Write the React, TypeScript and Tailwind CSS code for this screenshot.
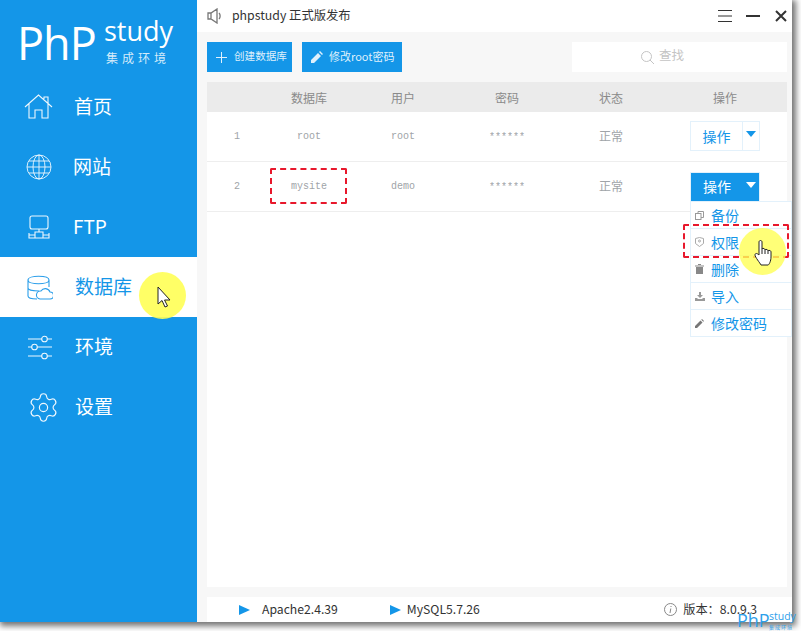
import { Settings } from 'lucide-react';

const CJK = "font-['Noto_Sans_CJK_SC',sans-serif]";

const S = { fill: 'none', stroke: 'currentColor', strokeWidth: 1.1 } as const;

const icons: Record<string, JSX.Element> = {
  home: (
    <svg width="30" height="26" viewBox="0 0 30 26" {...S}>
      <path d="M1 13 14.5 1 28 13M5 10v14h6v-8h7v8h6V10M20 5V3h4v6" />
    </svg>
  ),
  web: (
    <svg width="26" height="26" viewBox="0 0 26 26" {...S} strokeWidth="0.9">
      <circle cx="13" cy="13" r="12" />
      <ellipse cx="13" cy="13" rx="6" ry="12" />
      <path d="M13 1v24M1 13h24M3 7h20M3 19h20" />
    </svg>
  ),
  ftp: (
    <svg width="22" height="25" viewBox="0 0 22 25" {...S}>
      <rect x="2" y="1" width="18" height="13" rx="2" />
      <path d="M11 14v3M7 17h8v6H7zM7 20H1v-2M15 20h6v-2M1 20v3h6M21 20v3h-6" />
    </svg>
  ),
  db: (
    <svg width="26" height="25" viewBox="0 0 26 25" {...S}>
      <path d="M1 5c0-5 21-5 21 0S1 10 1 5v16c0 2 4 3 9 3M1 13c0 2 6 3 11 3M22 5v7" />
      <path d="M13 24h10a3 3 0 0 0 0-7 5 5 0 0 0-9-1 4 4 0 0 0-1 8z" />
    </svg>
  ),
  env: (
    <svg width="25" height="25" viewBox="0 0 25 25" {...S}>
      <path d="M1 4h14M20 4h5M1 12h4M10 12h15M1 21h14M20 21h5" />
      <circle cx="17.500" cy="4" r="2.800" />
      <circle cx="7.500" cy="12" r="2.800" />
      <circle cx="17.500" cy="21" r="2.800" />
    </svg>
  ),
  gear: <Settings size={33} strokeWidth={0.85} />,
};

const nav = [
  { icon: 'home', label: '首页', x: 'pl-[24px]', gap: 'w-[50px]' },
  { icon: 'web', label: '网站', x: 'pl-[26px]', gap: 'w-[47px]' },
  { icon: 'ftp', label: 'FTP', x: 'pl-[28px]', gap: 'w-[45px]' },
  { icon: 'db', label: '数据库', x: 'pl-[27px]', gap: 'w-[48px]', active: true },
  { icon: 'env', label: '环境', x: 'pl-[27px]', gap: 'w-[48px]' },
  { icon: 'gear', label: '设置', x: 'pl-[27px]', gap: 'w-[48px]' },
];

function NavItem({ item }: { item: (typeof nav)[number] }) {
  return (
    <div className={`h-[60px] flex items-center ${item.x} ${item.active ? 'bg-white text-[#2a9eea]' : 'text-[#eef7fd]'}`}>
      <div className={`${item.gap} shrink-0 flex items-center`}>{icons[item.icon]}</div>
      <span className={`${CJK} text-[19px] leading-none pb-[3px] ${item.active ? 'text-[#1496e8]' : 'text-white'}`}>{item.label}</span>
    </div>
  );
}

function Row({ n, db, user, active }: { n: string; db: string; user: string; active?: boolean }) {
  return (
    <div className="h-[50px] grid grid-cols-[60px_84px_104px_104px_104px_1fr] items-center border-b border-[#eeeeee] bg-white text-[#a0a4a8]">
      <span className="text-center font-['Liberation_Mono',monospace] text-[10px]">{n}</span>
      <span className="text-center font-['Liberation_Mono',monospace] text-[10px]">{db}</span>
      <span className="text-center font-['Liberation_Mono',monospace] text-[10px]">{user}</span>
      <span className="text-center font-['Liberation_Mono',monospace] text-[10px] pt-[2px]">******</span>
      <span className={`text-center ${CJK} text-[12px] pb-[2px]`}>正常</span>
      <div className={`pl-[27px] ${active ? '' : 'pb-[1px]'}`}>
        {active ? (
          <div className="w-[70px] h-[30px] bg-[#1496e8] border border-[#e3f1fb] flex items-center text-white">
            <span className={`w-[52px] text-center ${CJK} text-[14px] pb-[1px]`}>操作</span>
            <span className="w-0 h-0 border-x-[5px] border-x-transparent border-t-[6px] border-t-white ml-[3px] -mt-[4px]" />
          </div>
        ) : (
          <div className="w-[70px] h-[30px] bg-white border border-[#e3f1fb] flex items-center text-[#1496e8]">
            <span className={`w-[52px] text-center ${CJK} text-[14px] border-r border-[#e3f1fb] h-full leading-[28px]`}>操作</span>
            <span className="w-0 h-0 border-x-[5px] border-x-transparent border-t-[6px] border-t-[#1496e8] ml-[3px] -mt-[4px]" />
          </div>
        )}
      </div>
    </div>
  );
}

const menu: { label: string; icon: JSX.Element }[] = [
  {
    label: '备份',
    icon: (
      <svg width="9" height="9" viewBox="0 0 9 9" fill="none" stroke="#999" strokeWidth="1">
        <rect x="0.500" y="2.500" width="5.500" height="6" />
        <path d="M3 2V.5h5.500V6.500H6" />
      </svg>
    ),
  },
  {
    label: '权限',
    icon: (
      <svg width="9" height="10" viewBox="0 0 9 10" fill="none" stroke="#aaa" strokeWidth="1">
        <path d="M.5 1.500 4.500.5l4 1v5l-4 3-4-3z" />
        <circle cx="4.500" cy="4" r="1" />
      </svg>
    ),
  },
  {
    label: '删除',
    icon: (
      <svg width="9" height="10" viewBox="0 0 9 10" fill="#888">
        <path d="M0 1.500h9v1H0zM3 0h3v1H3zM1 3h7v7H1z" />
      </svg>
    ),
  },
  {
    label: '导入',
    icon: (
      <svg width="10" height="9" viewBox="0 0 10 9" fill="#999">
        <path d="M4 0h2v3h2L5 6 2 3h2zM0 6h2l1 1h4l1-1h2v3H0z" />
      </svg>
    ),
  },
  {
    label: '修改密码',
    icon: (
      <svg width="9" height="9" viewBox="0 0 9 9" fill="#777">
        <path d="M0 9V7l5.500-5.500 2 2L2 9zM6.300.7 7 0l2 2-.7.7z" />
      </svg>
    ),
  },
];

export default function App() {
  return (
    <div className="relative w-[801px] h-[631px] bg-white overflow-hidden font-['Liberation_Sans',sans-serif]">
      <div className="relative w-[792px] h-[622px] flex bg-[#f7f7f7] shadow-[2px_2px_6px_2px_rgba(0,0,0,0.55)]">
        {/* Sidebar */}
        <aside className="w-[197px] shrink-0 bg-[#1496e8]">
          <div className="h-[77px] relative text-white font-['Open_Sans',sans-serif]">
            <span className="absolute left-[17px] top-[13px] text-[45px] leading-[60px] tracking-[-1px]">PhP</span>
            <span className="absolute left-[104px] top-[11px] text-[27px] leading-[40px]">study</span>
            <span className={`absolute left-[106px] top-[50px] ${CJK} text-[12px] leading-[16px] tracking-[4px] text-[#d5ebfa]`}>集成环境</span>
          </div>
          {nav.map((item) => (
            <NavItem key={item.label} item={item} />
          ))}
        </aside>

        {/* Main */}
        <main className="flex-1 flex flex-col min-w-0">
          <header className="h-[32px] bg-white flex items-center pl-[10px] pr-[5px] shrink-0">
            <svg width="15" height="16" viewBox="0 0 15 16" fill="none" stroke="#777" strokeWidth="1.300">
              <path d="M1 5h3l6-4v14l-6-4H1zM4 5v6M12 5c1.500 1.500 1.500 4.500 0 6" />
            </svg>
            <span className={`ml-[10px] text-[12.300px] text-[#333] pb-[2px] ${CJK}`}>phpstudy 正式版发布</span>
            <div className="ml-auto flex items-center text-[#333]">
              <svg width="14" height="12" viewBox="0 0 14 12" stroke="currentColor" strokeWidth="1">
                <path d="M0 .5h14M0 6h14M0 11.500h14" />
              </svg>
              <span className="ml-[14px] w-[14px] h-[2px] bg-[#333]" />
              <svg className="ml-[15px]" width="12" height="12" viewBox="0 0 12 12" stroke="currentColor" strokeWidth="2">
                <path d="m1 1 10 10M11 1 1 11" />
              </svg>
            </div>
          </header>

          <div className="flex-1 flex flex-col pl-[10px] pr-[5px] pt-[10px] min-h-0">
            <div className="h-[30px] flex items-stretch shrink-0">
              <div className="w-[85px] bg-[#1496e8] text-[#dff0fc] flex items-center pl-[9px]">
                <svg width="11" height="11" viewBox="0 0 11 11" stroke="currentColor" strokeWidth="1">
                  <path d="M5.500 0v11M0 5.500h11" />
                </svg>
                <span className={`ml-[7px] ${CJK} text-[10.600px] pb-[2px]`}>创建数据库</span>
              </div>
              <div className="ml-[10px] w-[100px] bg-[#1496e8] text-[#dff0fc] flex items-center pl-[9px]">
                <svg width="12" height="12" viewBox="0 0 12 12" fill="currentColor">
                  <path d="M0 12V9l7-7 3 3-7 7zM8 1l1-1 3 3-1 1z" />
                </svg>
                <span className={`ml-[6px] ${CJK} text-[11px] pb-[2px]`}>修改root密码</span>
              </div>
              <div className="ml-auto w-[215px] bg-white flex items-center pl-[69px] text-[#c4c4c4]">
                <svg width="13" height="13" viewBox="0 0 13 13" fill="none" stroke="currentColor" strokeWidth="1">
                  <circle cx="5.500" cy="5.500" r="5" />
                  <path d="m9 9 4 4" />
                </svg>
                <span className={`ml-[5px] ${CJK} text-[12.500px] pb-[3px]`}>查找</span>
              </div>
            </div>

            <div className={`mt-[10px] h-[30px] shrink-0 bg-[#ebebeb] grid grid-cols-[60px_84px_104px_104px_104px_1fr] items-center text-center ${CJK} text-[12px] text-[#8a8a8a] pt-[1px]`}>
              <span />
              <span>数据库</span>
              <span>用户</span>
              <span>密码</span>
              <span>状态</span>
              <span>操作</span>
            </div>

            <div className="flex-1 bg-white min-h-0">
              <Row n="1" db="root" user="root" />
              <Row n="2" db="mysite" user="demo" active />
            </div>

            <div className="h-[10px] shrink-0" />
          </div>

          <footer className={`h-[25px] shrink-0 ml-[10px] bg-white flex items-center text-[12.200px] text-[#333] pr-[35px] ${CJK}`}>
            <span className="ml-[32px] w-0 h-0 border-y-[5.500px] border-y-transparent border-l-[11px] border-l-[#1496e8]" />
            <span className="ml-[12px] pb-[1px]">Apache2.4.39</span>
            <span className="ml-[52px] w-0 h-0 border-y-[5.500px] border-y-transparent border-l-[11px] border-l-[#1496e8]" />
            <span className="ml-[6px] pb-[1px]">MySQL5.7.26</span>
            <span className="ml-auto flex items-center">
              <svg width="13" height="13" viewBox="0 0 13 13" fill="none" stroke="#888" strokeWidth="1">
                <circle cx="6.500" cy="6.500" r="6" />
                <path d="M7 3v1M6.800 5.500 6 10" />
              </svg>
              <span className="ml-[6px] pb-[1px]">版本：8.0.9.3</span>
            </span>
          </footer>
        </main>

        {/* Dropdown menu */}
        <div className="absolute left-[690px] top-[201px] w-[102px] h-[136px] border border-[#e3f1fb] bg-white">
          {menu.map((m) => (
            <div key={m.label} className="h-[27px] flex items-center pl-[4px] border-b border-[#e3f1fb] last:border-b-0">
              <span className="w-[16px] flex justify-start">{m.icon}</span>
              <span className={`${CJK} text-[14px] text-[#1496e8] leading-none pb-[1px]`}>{m.label}</span>
            </div>
          ))}
        </div>

        {/* Highlights */}
        <div className="absolute left-[270px] top-[168px] w-[77px] h-[36px] border-2 border-dashed border-[#e8182c] rounded-[2px]" />
        <div className="absolute left-[683px] top-[224px] w-[106px] h-[34px] border-2 border-dashed border-[#e8182c] rounded-[2px]" />
        <div className="absolute left-[139px] top-[272px] w-[47px] h-[47px] rounded-full bg-[#ffff55]/90" />
        <div className="absolute left-[739px] top-[228px] w-[47px] h-[47px] rounded-full bg-[#ffff55]/80" />

        {/* Arrow cursor */}
        <svg className="absolute left-[157px] top-[286px]" width="15" height="22" viewBox="0 0 15 22">
          <path d="M1 1v17l4-3.500 3 6.500 2.500-1-3-6H13z" fill="#fff" stroke="#222" strokeWidth="1" />
        </svg>
        {/* Hand cursor */}
        <svg className="absolute left-[754px] top-[240px]" width="19" height="26" viewBox="0 0 19 26">
          <path d="M5 2c0-2 3-2 3 0v7c0-1 3-1 3 1 0-1 3-1 3 1 0-1 3-1 3 1v5c0 4-2 8-3 8H7c-1-2-6-8-6-10s2-2 4 0z" fill="#fff" stroke="#222" strokeWidth="1" />
          <path d="M8 9v5M11 10v4M14 11v3" stroke="#222" strokeWidth="1" />
        </svg>
      </div>

      {/* Watermark */}
      <div className="absolute left-[737px] top-[608px] h-[23px] w-[64px] text-[#2ea0ea] font-['Open_Sans',sans-serif]">
        <span className="absolute left-0 top-[1px] text-[18px] leading-[22px]">PhP</span>
        <span className="absolute left-[32px] top-[2px] text-[10.500px] leading-[13px]">study</span>
        <span className={`absolute left-[32px] top-[15px] ${CJK} text-[5px] leading-[7px] tracking-[1px]`}>集成环境</span>
      </div>
    </div>
  );
}
